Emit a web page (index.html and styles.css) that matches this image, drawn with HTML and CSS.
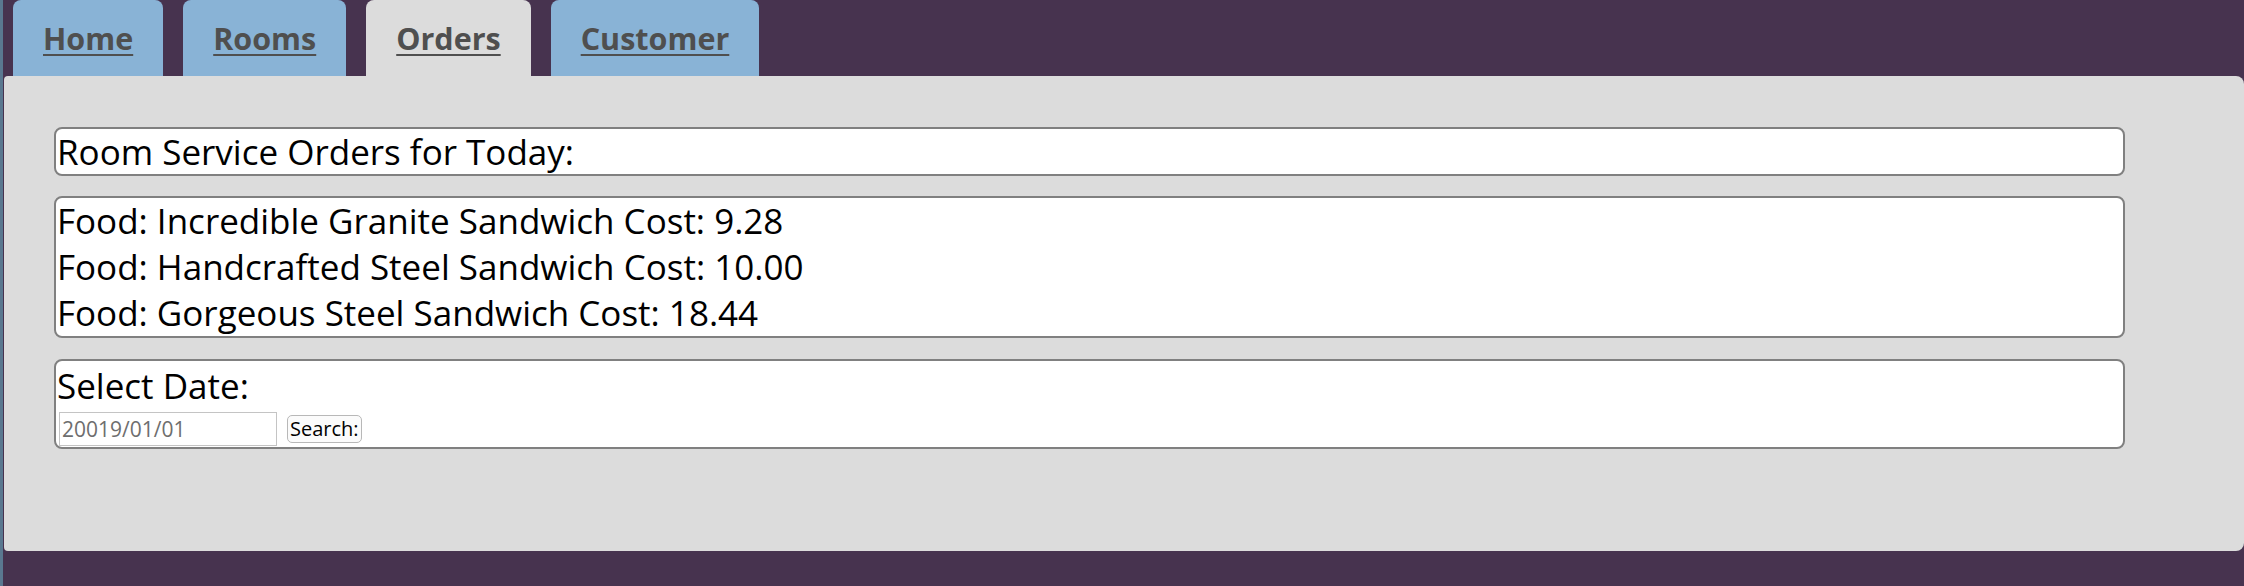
FILE: index.html
```html
<!DOCTYPE html>
<html lang="en">
<head>
<meta charset="utf-8">
<title>Orders</title>
<link rel="stylesheet" href="styles.css">
</head>
<body>
<nav class="tabs">
  <a class="tab" href="#">Home</a>
  <a class="tab" href="#">Rooms</a>
  <a class="tab tab-active" href="#">Orders</a>
  <a class="tab" href="#">Customer</a>
</nav>
<main class="panel">
  <div class="box box-title">Room Service Orders for Today:</div>
  <div class="box box-list">
    <div class="order">Food: Incredible Granite Sandwich Cost: 9.28</div>
    <div class="order">Food: Handcrafted Steel Sandwich Cost: 10.00</div>
    <div class="order">Food: Gorgeous Steel Sandwich Cost: 18.44</div>
  </div>
  <div class="box box-date">
    <div class="date-label">Select Date:</div>
    <div class="date-row">
      <input class="date-input" type="text" placeholder="20019/01/01">
      <button class="search-btn" type="button">Search:</button>
    </div>
  </div>
</main>
</body>
</html>
```
FILE: styles.css
```css
html, body {
  margin: 0;
  padding: 0;
}
body {
  background: #47334f;
  border-left: 3px solid #5a7890;
  min-height: 586px;
  box-sizing: border-box;
  font-family: "Open Sans", "Noto Sans", sans-serif;
}
.tabs {
  display: flex;
  gap: 20px;
  padding-left: 10px;
  height: 76px;
}
.tab {
  display: flex;
  align-items: center;
  padding: 0 30px;
  height: 76px;
  box-sizing: border-box;
  background: #89b3d6;
  border-radius: 8px 8px 0 0;
  color: #4f4f4f;
  font-weight: 700;
  font-size: 30.5px;
  text-decoration: underline;
  text-decoration-thickness: 2px;
  text-underline-offset: 4px;
}
.tab-active {
  background: #dcdcdc;
}
.panel {
  margin-left: 1px;
  height: 475px;
  box-sizing: border-box;
  background: #dcdcdc;
  border-radius: 4px 8px 8px 4px;
  padding: 51px 119px 0 50px;
  display: flex;
  flex-direction: column;
  gap: 20px;
}
.box {
  background: #fff;
  border: 2px solid #808080;
  border-radius: 8px;
  color: #000;
  font-size: 35px;
  padding: 0 1px;
}
.box-title {
  line-height: 45px;
}
.box-date {
  margin-top: 1px;
}
.order {
  line-height: 46px;
}
.date-label {
  line-height: 49px;
}
.date-row {
  display: flex;
  align-items: center;
  gap: 10px;
  padding: 1px 0 0 2px;
  height: 36px;
}
.date-input {
  width: 218px;
  height: 34px;
  box-sizing: border-box;
  margin: 0;
  border: 1px solid #c4c4c4;
  padding: 0 2px;
  font-family: inherit;
  font-size: 21px;
  color: #333;
}
.date-input::placeholder {
  color: #6e6e6e;
}
.search-btn {
  height: 28px;
  margin: 0;
  padding: 0 2px;
  border: 1px solid #b8b8b8;
  border-radius: 5px;
  background: #fbfbfb;
  font-family: inherit;
  font-size: 20px;
  line-height: 1;
  color: #000;
}
```
